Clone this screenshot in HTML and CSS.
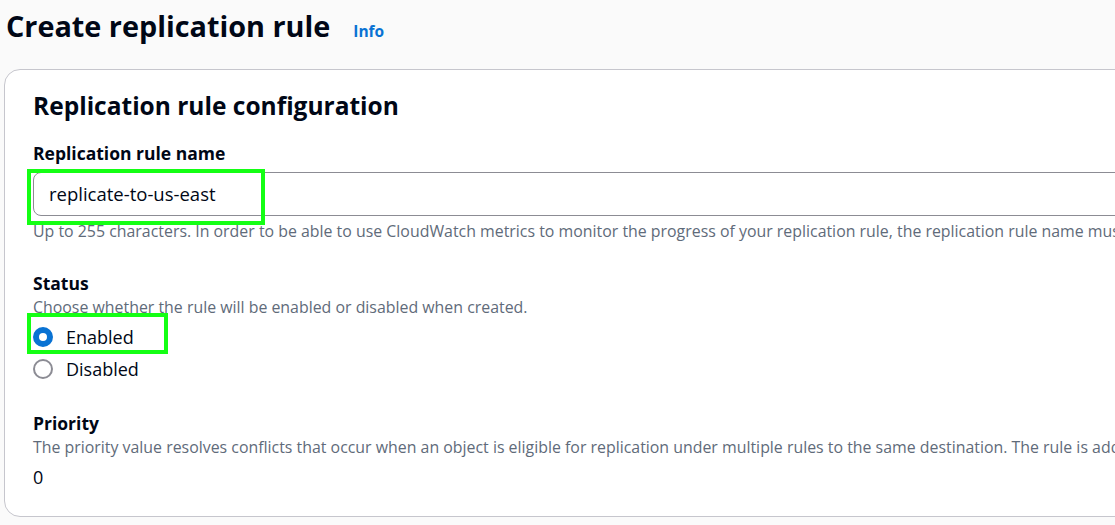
FILE: index.html
```html
<!DOCTYPE html>
<html>
<head>
<meta charset="utf-8">
<link rel="stylesheet" href="styles.css">
</head>
<body>
<header class="page-header">
  <h1 class="page-title">Create replication rule</h1>
  <a class="info-link" href="#">Info</a>
</header>
<section class="card">
  <h2 class="card-title">Replication rule configuration</h2>
  <div class="field">
    <div class="label">Replication rule name</div>
    <div class="input-wrap">
      <div class="text-input">replicate-to-us-east</div>
      <div class="highlight highlight-input"></div>
    </div>
    <div class="hint">Up to 255 characters. In order to be able to use CloudWatch metrics to monitor the progress of your replication rule, the replication rule name must only contain English characters.</div>
  </div>
  <div class="field field-status">
    <div class="label">Status</div>
    <div class="desc">Choose whether the rule will be enabled or disabled when created.</div>
    <div class="radios">
      <div class="radio-row">
        <span class="radio radio-checked"></span>
        <span class="radio-label">Enabled</span>
        <div class="highlight highlight-radio"></div>
      </div>
      <div class="radio-row">
        <span class="radio"></span>
        <span class="radio-label">Disabled</span>
      </div>
    </div>
  </div>
  <div class="field field-priority">
    <div class="label">Priority</div>
    <div class="desc">The priority value resolves conflicts that occur when an object is eligible for replication under multiple rules to the same destination. The rule is added to the configuration at the highest priority and the priority can be changed on the Replication rules page.</div>
    <div class="value">0</div>
  </div>
</section>
</body>
</html>
```
FILE: styles.css
```css
html, body {
  margin: 0;
  padding: 0;
}
body {
  background: #fafafa;
  font-family: "Open Sans", "Noto Sans", sans-serif;
  color: #000716;
  overflow: hidden;
  height: 525px;
}
.page-header {
  display: flex;
  align-items: baseline;
  padding: 6px 0 0 6px;
  height: 40px;
}
.page-title {
  margin: 0;
  font-size: 28.8px;
  line-height: 40px;
  font-weight: 700;
}
.info-link {
  margin-left: 23px;
  font-size: 15.5px;
  font-weight: 700;
  color: #0972d3;
  text-decoration: none;
}
.card {
  margin: 23px -300px 0 4px;
  background: #fff;
  border: 1px solid #c6c6cd;
  border-radius: 16px;
  padding: 20px 28px 28px 28px;
}
.card-title {
  margin: 0;
  font-size: 24.5px;
  line-height: 32px;
  font-weight: 700;
}
.field { margin-top: 20px; }
.label {
  font-size: 17.5px;
  line-height: 22px;
  font-weight: 700;
}
.input-wrap {
  position: relative;
  margin-top: 8px;
}
.text-input {
  height: 42px;
  box-sizing: content-box;
  border: 1px solid #8c8c94;
  border-radius: 8px;
  padding: 0 15px;
  font-size: 18.5px;
  line-height: 42px;
  background: #fff;
}
.highlight {
  position: absolute;
  border: 4px solid #14ff14;
  box-sizing: border-box;
  pointer-events: none;
}
.highlight-input {
  left: -6px;
  top: -3px;
  width: 238px;
  height: 56px;
}
.hint, .desc {
  font-size: 15.9px;
  line-height: 20px;
  color: #5f6b7a;
  white-space: nowrap;
}
.hint { margin-top: 5px; }
.field-status { margin-top: 31px; }
.field-status .desc { margin-top: 3px; }
.radios {
  display: flex;
  flex-direction: column;
  gap: 6px;
  margin-top: 7px;
}
.radio-row {
  position: relative;
  display: flex;
  align-items: center;
  height: 26px;
  gap: 13px;
  font-size: 18px;
}
.radio {
  flex: none;
  width: 20px;
  height: 20px;
  border-radius: 50%;
  border: 2px solid #8c8c94;
  box-sizing: border-box;
  background: #fff;
}
.radio-checked {
  border: 6px solid #0972d3;
}
.highlight-radio {
  left: -6px;
  top: -11px;
  width: 141px;
  height: 41px;
}
.field-priority { margin-top: 30px; }
.field-priority .desc { margin-top: 3px; }
.value {
  margin-top: 9px;
  font-size: 18px;
  line-height: 22px;
}
```
